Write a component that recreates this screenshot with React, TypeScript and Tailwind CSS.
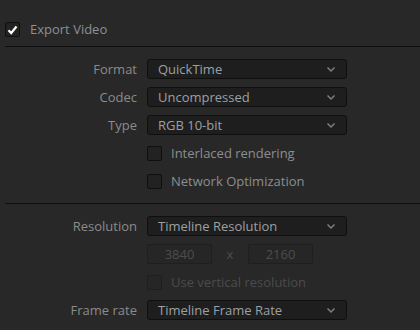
import { useState } from "react";

function Chevron() {
    return (
        <svg width="10" height="7" viewBox="0 0 10 7" className="shrink-0">
            <path d="M1.5 1.5 L5 5 L8.5 1.5" fill="none" stroke="#7e7e7e" strokeWidth="1.5" />
        </svg>
    );
}

function Select({ value }: { value: string }) {
    return (
        <div className="flex items-center justify-between w-[200px] h-[20px] pl-[10px] pr-[10px] bg-[#1e1e1e] border border-[#0f0f0f] rounded-[3px] text-[#9ca0a4]">
            <span className="leading-none">{value}</span>
            <Chevron />
        </div>
    );
}

function Box({ checked = false, disabled = false }: { checked?: boolean; disabled?: boolean }) {
    return (
        <div
            className={
                disabled
                    ? "w-[15px] h-[15px] rounded-[2px] border border-[#1f1f1f] bg-[#262626] shrink-0"
                    : "w-[15px] h-[15px] rounded-[2px] border border-[#0f0f0f] bg-[#222222] shrink-0 flex items-center justify-center"
            }
        >
            {checked && (
                <svg width="11" height="10" viewBox="0 0 11 10">
                    <path d="M1.5 5.2 L4.2 8 L9.5 1.5" fill="none" stroke="#ffffff" strokeWidth="2.2" />
                </svg>
            )}
        </div>
    );
}

function Row({ label, children }: { label?: string; children: React.ReactNode }) {
    return (
        <div className="flex items-center h-[20px]">
            <div className="w-[137px] text-right text-[#8b8b8b]">{label}</div>
            <div className="ml-[10px] flex items-center">{children}</div>
        </div>
    );
}

function CheckRow({ label, disabled = false }: { label: string; disabled?: boolean }) {
    const [on, setOn] = useState(false);
    return (
        <Row>
            <div className="flex items-center gap-[9px] cursor-default" onClick={() => !disabled && setOn(!on)}>
                <Box checked={on} disabled={disabled} />
                <span className={disabled ? "text-[#4b4b4b]" : "text-[#8a8e92]"}>{label}</span>
            </div>
        </Row>
    );
}

export default function App() {
    return (
        <div
            className="w-[420px] h-[330px] bg-[#282828] overflow-hidden text-[13px] leading-none"
            style={{ fontFamily: '"Open Sans", "Liberation Sans", sans-serif' }}
        >
            {/* Header */}
            <div className="flex items-center gap-[10px] pl-[5px] pt-[22px]">
                <Box checked />
                <span className="text-[#8a9095]">Export Video</span>
            </div>
            <div className="ml-[5px] mt-[9px] h-px bg-[#0e0e0e]" />

            {/* Format section */}
            <div className="flex flex-col gap-[8px] mt-[12px]">
                <Row label="Format"><Select value="QuickTime" /></Row>
                <Row label="Codec"><Select value="Uncompressed" /></Row>
                <Row label="Type"><Select value="RGB 10-bit" /></Row>
                <CheckRow label="Interlaced rendering" />
                <CheckRow label="Network Optimization" />
            </div>
            <div className="ml-[5px] mt-[12px] h-px bg-[#0e0e0e]" />

            {/* Resolution section */}
            <div className="flex flex-col gap-[8px] mt-[12px]">
                <Row label="Resolution"><Select value="Timeline Resolution" /></Row>
                <Row>
                    <div className="flex items-center">
                        <div className="w-[65px] h-[20px] flex items-center justify-center border border-[#1f1f1f] bg-[#262626] rounded-[2px] text-[#4d4d4d]">3840</div>
                        <span className="w-[36px] text-center text-[#4d4d4d]">x</span>
                        <div className="w-[65px] h-[20px] flex items-center justify-center border border-[#1f1f1f] bg-[#262626] rounded-[2px] text-[#4d4d4d]">2160</div>
                    </div>
                </Row>
                <CheckRow label="Use vertical resolution" disabled />
                <Row label="Frame rate"><Select value="Timeline Frame Rate" /></Row>
            </div>
        </div>
    );
}
